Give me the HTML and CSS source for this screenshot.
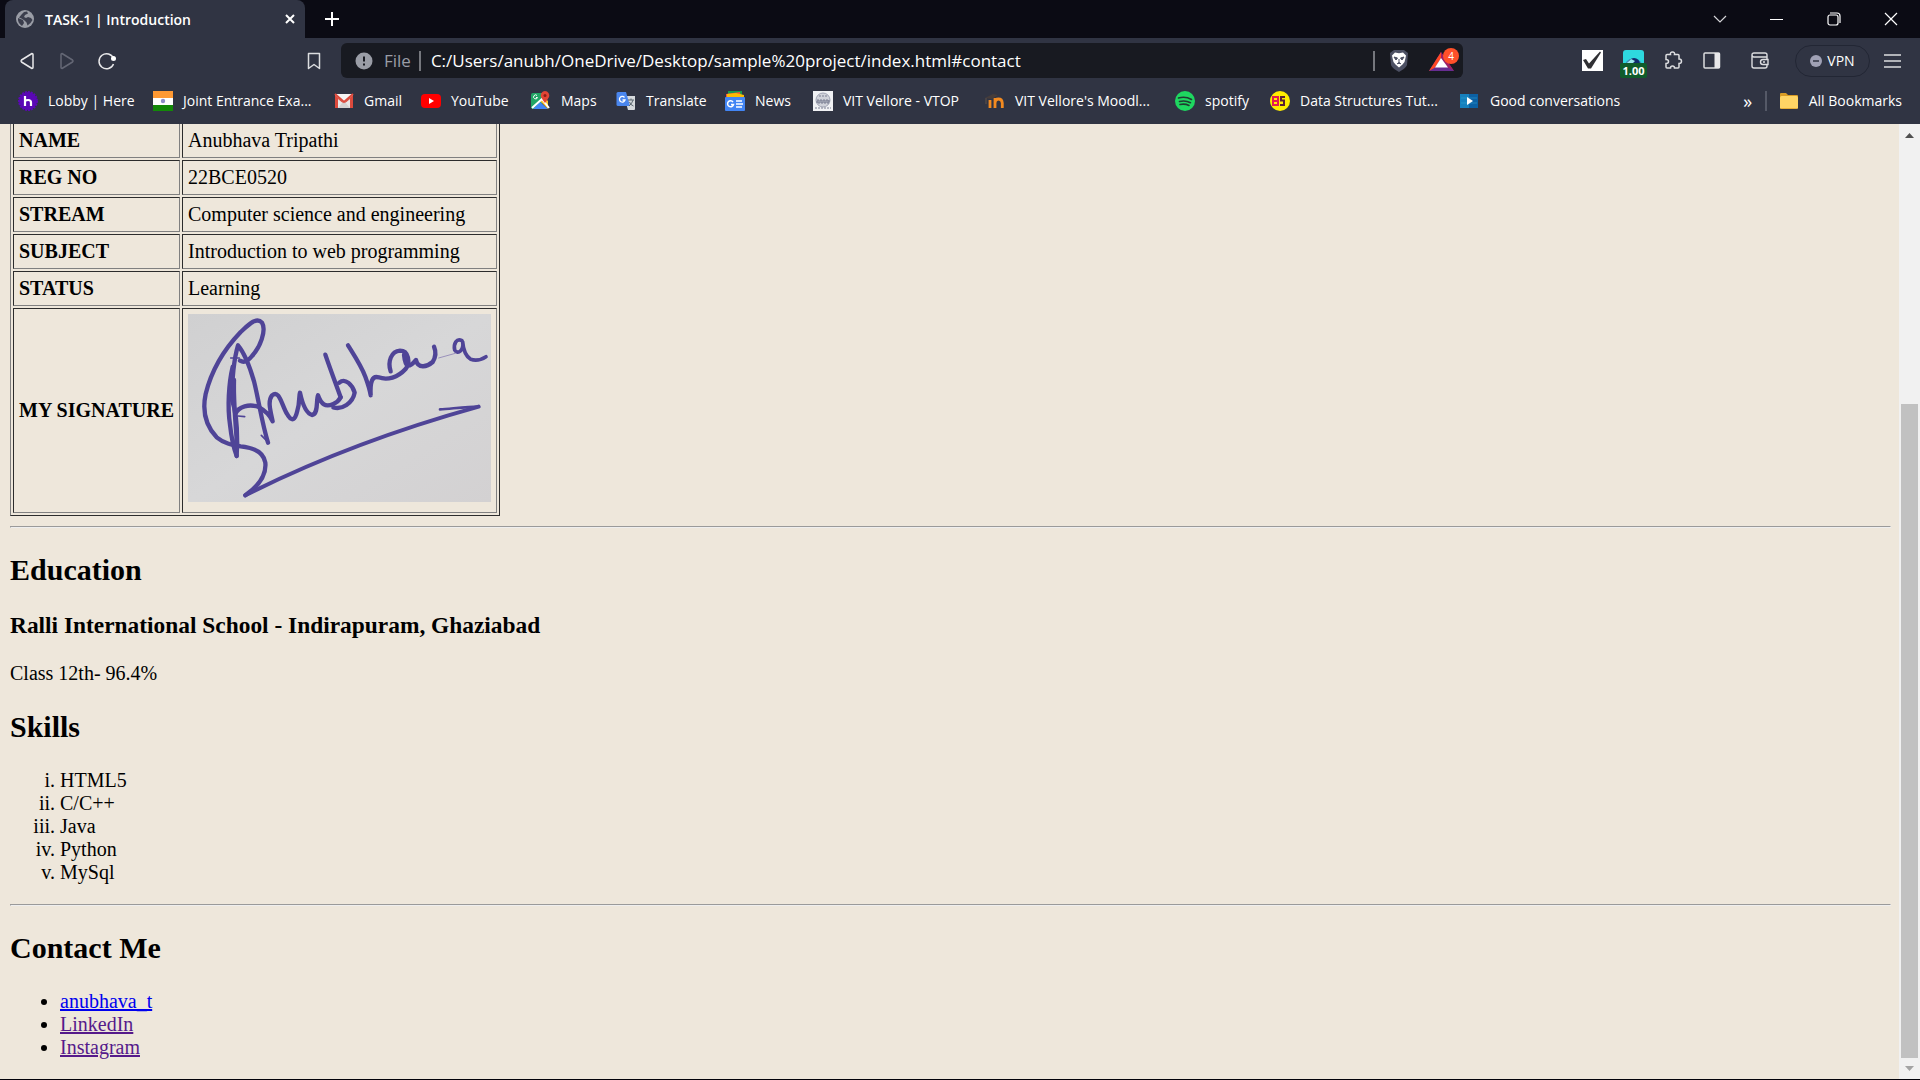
FILE: index.html
```html
<!DOCTYPE html>
<html lang="en">
<head>
<meta charset="utf-8">
<title>TASK-1 | Introduction</title>
<link rel="stylesheet" href="styles.css">
</head>
<body>
<div class="window">
  <header class="chrome">
    <div class="tabstrip">
      <div class="tab">
        <svg class="tab-icon" width="18" height="18" viewBox="0 0 18 18"><circle cx="9" cy="9" r="9" fill="#9a9da6"/><path d="M2 8l5 2 1 3-2 3C3 14 1.500 11 2 8zM8 2l3-.5 1 2-3 1.500-1 2 2 1 2-1 3 1 1.500 2-2 3-3 2.500-1-3-2-2-3-2-2.500-1L6 4z" fill="#3b3e4d"/></svg>
        <span class="tab-title">TASK-1 | Introduction</span>
        <button class="tab-close" aria-label="Close tab"><svg width="10" height="10" viewBox="0 0 10 10"><path d="M1 1l8 8M9 1L1 9" stroke="#fff" stroke-width="2"/></svg></button>
      </div>
      <button class="new-tab" aria-label="New tab"><svg width="16" height="16" viewBox="0 0 16 16"><path d="M8 1v14M1 8h14" stroke="#fff" stroke-width="2"/></svg></button>
      <div class="window-buttons">
        <button aria-label="Search tabs"><svg width="14" height="14" viewBox="0 0 14 14"><path d="M1 4l6 6 6-6" fill="none" stroke="#d5d5d8" stroke-width="1.200"/></svg></button>
        <button aria-label="Minimize"><svg width="14" height="14" viewBox="0 0 14 14"><path d="M0 7.500h13" stroke="#fff"/></svg></button>
        <button aria-label="Restore"><svg width="14" height="14" viewBox="0 0 14 14"><rect x="1" y="3" width="10" height="10" rx="2" fill="none" stroke="#fff" stroke-width="1.200"/><path d="M3 1h7a3 3 0 0 1 3 3v7" fill="none" stroke="#fff" stroke-width="1.200"/></svg></button>
        <button aria-label="Close"><svg width="14" height="14" viewBox="0 0 14 14"><path d="M1 1l12 12M13 1L1 13" stroke="#fff" stroke-width="1.200"/></svg></button>
      </div>
    </div>

    <div class="toolbar">
      <div class="nav">
        <button aria-label="Back"><svg width="20" height="20" viewBox="0 0 20 20"><path d="M15 2.500q1 0 1 1v13q0 1-1 1L4.500 11q-1-1 0-2z" fill="none" stroke="#e8e8ea" stroke-width="1.500" stroke-linejoin="round"/></svg></button>
        <button aria-label="Forward"><svg width="20" height="20" viewBox="0 0 20 20"><path d="M5 2.500q-1 0-1 1v13q0 1 1 1L15.500 11q1-1 0-2z" fill="none" stroke="#646775" stroke-width="1.500" stroke-linejoin="round"/></svg></button>
        <button aria-label="Reload"><svg width="20" height="20" viewBox="0 0 20 20"><path d="M16.500 7.500A7.500 7.500 0 1 0 16.500 13" fill="none" stroke="#e8e8ea" stroke-width="1.500"/><circle cx="16.500" cy="7.500" r="2.500" fill="#fff"/></svg></button>
      </div>
      <button class="save" aria-label="Bookmark this page"><svg width="14" height="18" viewBox="0 0 14 18"><path d="M1.500 1.500h11v15L7 12.500l-5.500 4z" fill="none" stroke="#dcdde0" stroke-width="1.500" stroke-linejoin="round"/></svg></button>
      <div class="address">
        <svg width="18" height="18" viewBox="0 0 18 18"><circle cx="9" cy="9" r="8.500" fill="#9a9da6"/><path d="M9 4.500v5M9 11.500v2" stroke="#181a21" stroke-width="2"/></svg>
        <span class="scheme">File</span>
        <span class="rule"></span>
        <input class="url" type="text" aria-label="Address" value="C:/Users/anubh/OneDrive/Desktop/sample%20project/index.html#contact">
        <span class="rule"></span>
        <button class="shield" aria-label="Shields"><svg width="20" height="22" viewBox="0 0 20 22"><path d="M5 0h10l4 3-1 12c-1 3-5 5-8 7-3-2-7-4-8-7L1 3z" fill="#4c5063"/><path d="M6 2.500l4 .8 4-.8 3 3-.5 2.500-1 4-2 2.500-3.500 3-3.500-3-2-2.500-1-4L3 5.500z" fill="#fff"/><path d="M5 7l3.500 1-1.500 2zM15 7l-3.500 1 1.500 2zM10 9v4M8 14l2-1.500 2 1.500" fill="#4c5063" stroke="#4c5063"/></svg></button>
        <button class="rewards" aria-label="Rewards, 4 new"><svg width="26" height="22" viewBox="0 0 26 22"><path d="M12 2L0 21h25z" fill="#662d91"/><path d="M12 2L0 21l6-3.500L12 8z" fill="#ff4724"/><path d="M12 2v6l7 9.500 6 3.500z" fill="#9e1f63"/><path d="M12 8l-6 9.500h13z" fill="#fff"/></svg><span class="count">4</span></button>
      </div>
      <div class="extensions">
        <button aria-label="Tasks"><svg width="21" height="21" viewBox="0 0 21 21"><path d="M0 0h21v21H0z" fill="#fff"/><path d="M1 10l3-1 3 4.500L18 1.500l1 1L9 18.500H6z" fill="#303034"/></svg></button>
        <button class="speed" aria-label="Video speed"><svg width="21" height="21" viewBox="0 0 21 21"><rect width="21" height="21" rx="3" fill="#2ed8df"/><path d="M2 14a9 8 0 0 1 17 0z" fill="#3d8fb8"/><path d="M5 14a6 6 0 0 1 12 0z" fill="#102b6e"/><path d="M3 14l5-5 4 2-3 3z" fill="#9be9ef"/></svg><span class="rate">1.00</span></button>
        <button aria-label="Extensions"><svg width="19" height="19" viewBox="0 0 19 19"><path d="M2 4.500q0-1 1-1h3.500q-.5-2.500 2-2.500t2 2.500H14q1 0 1 1V8q2.500 0 2.500 2.200T15 12.500V16q0 1-1 1h-3.500q0-2-2-2t-2 2H3q-1 0-1-1v-3.500q2.500 0 2.500-2T2 8.500z" fill="none" stroke="#dcdde0" stroke-width="1.500"/></svg></button>
        <button aria-label="Sidebar"><svg width="18" height="17" viewBox="0 0 18 17"><rect x="1" y="1" width="15.500" height="15" rx="1" fill="none" stroke="#dcdde0" stroke-width="1.500"/><path d="M11.500 1H17v15h-5.500z" fill="#e8e8ea"/></svg></button>
        <button class="wallet" aria-label="Wallet"><svg width="18" height="17" viewBox="0 0 18 17"><path d="M16 4.500V3q0-2-2-2H3Q1 1 1 3v11q0 2 2 2h11q2 0 2-2v-1.500M1 3q0 2 2 2h13v2.500M17 7.500h-5q-2.500 0-2.500 2.500t2.500 2.500h5zM12 10h2" fill="none" stroke="#dcdde0" stroke-width="1.400"/></svg></button>
      </div>
      <button class="vpn"><svg width="12" height="12" viewBox="0 0 12 12"><circle cx="6" cy="6" r="6" fill="#a0a1b5"/><path d="M3 6h6" stroke="#303443" stroke-width="1.500"/></svg>VPN</button>
      <button class="menu" aria-label="Menu"><svg width="18" height="14" viewBox="0 0 18 14"><path d="M0 1h17M0 7h17M0 13h17" stroke="#dcdde0" stroke-width="1.500"/></svg></button>
    </div>

    <nav class="bookmarks">
      <div class="bookmark-list">
        <a href="#"><svg width="20" height="20" viewBox="0 0 20 20"><circle cx="10" cy="10" r="9" fill="#5a08b5" stroke="#5a08b5" stroke-width="2" stroke-dasharray="2 1"/><path d="M7 5v10M7 10.500Q7 9 10 9t3 2.500V15" fill="none" stroke="#fff" stroke-width="2.200"/></svg>Lobby | Here</a>
        <a href="#"><svg width="20" height="20" viewBox="0 0 20 20"><path d="M0 0h20v7H0z" fill="#ff9933"/><path d="M0 7h20v7H0z" fill="#fff"/><path d="M0 14h20v6H0z" fill="#138808"/><circle cx="10" cy="10" r="2.200" fill="#8e8dc8"/></svg>Joint Entrance Exa...</a>
        <a href="#"><svg width="20" height="20" viewBox="0 0 20 20"><path d="M1 3h18v14H1z" fill="#e9e7e7"/><path d="M1 17V4l9 8 9-8v13h-3V8l-6 5-6-5v9z" fill="#dc4a3d"/><path d="M4 17l5-6h2l5 6z" fill="#d5d2d2"/><path d="M2 3h16l-8 7z" fill="#f5f4f4"/><path d="M1 3l9 8 9-8" fill="none" stroke="#dc4a3d" stroke-width="2"/></svg>Gmail</a>
        <a href="#"><svg width="20" height="20" viewBox="0 0 20 20"><rect y="3" width="20" height="14" rx="4" fill="#f00"/><path d="M8 7l5 3-5 3z" fill="#fff"/></svg>YouTube</a>
        <a href="#"><svg width="20" height="20" viewBox="0 0 20 20"><path d="M2 2h12v8L4 18H2q-2 0-2-2V4q0-2 2-2z" fill="#22a565"/><path d="M2 18l7-7 8 7z" fill="#4285f4"/><path d="M9 10l8 8V10l-4-4z" fill="#fbc32e"/><path d="M1 17L11 8l7 9" fill="none" stroke="#fff" stroke-width="2"/><path d="M14 0a4.500 4.500 0 0 1 4 6q-1 2-4 6-3-4-4-6a4.500 4.500 0 0 1 4-6z" fill="#e24435"/><circle cx="14" cy="4.500" r="1.500" fill="#8d1f18"/><path d="M6 4.500a2 2 0 1 0 .5 2H5" fill="none" stroke="#fff"/></svg>Maps</a>
        <a href="#"><svg width="20" height="20" viewBox="0 0 20 20"><path d="M8 5h11v13q0 1-1 1h-6z" fill="#d5d9dd"/><path d="M2 1h8l4 14H2q-1.500 0-1.500-1.500v-11Q.5 1 2 1z" fill="#4a86ee"/><path d="M8.500 6.500A2.800 2.800 0 1 0 9 9H6.500" fill="none" stroke="#fff" stroke-width="1.300"/><path d="M12 9h6M15 7.500V9M17 9q-1 4-4 6M13.500 11q1 3 4 4" fill="none" stroke="#5c6870"/></svg>Translate</a>
        <a href="#"><svg width="20" height="20" viewBox="0 0 20 20"><path d="M3 0h14v6H3z" fill="#159a52"/><path d="M1 3l14-2 1 6H1z" fill="#f5503f"/><path d="M2 3l9-1 8 2v4H2z" fill="#fbbc04"/><rect y="6" width="20" height="14" rx="1" fill="#4285f4"/><path d="M8 11a3 3 0 1 0 .5 2.500H6M11 10h6M11 13h7M11 16h6" fill="none" stroke="#fff" stroke-width="1.500"/></svg>News</a>
        <a href="#"><svg width="20" height="20" viewBox="0 0 20 20"><path d="M0 0h20v20H0z" fill="#f0f1f4"/><circle cx="10" cy="9" r="7" fill="#d0d2da" stroke="#a0a4b4"/><path d="M4 9h12v3H4zM6 5h8M2 17h16" fill="#9a9eae" stroke="#7a7f92" stroke-dasharray="2 1"/></svg>VIT Vellore - VTOP</a>
        <a href="#"><svg width="20" height="20" viewBox="0 0 20 20"><path d="M5 17V9M10 17V7M10 12q0-4 3.500-4t3.800 4v5" fill="none" stroke="#f28a20" stroke-width="2.800"/><path d="M0 7l8-4 5 1-6 4z" fill="#463c3a"/><path d="M1 7v6" stroke="#625346"/></svg>VIT Vellore's Moodl...</a>
        <a href="#"><svg width="20" height="20" viewBox="0 0 20 20"><circle cx="10" cy="10" r="10" fill="#1ed760"/><path d="M3.500 7q7-2 13 1.500M4.500 10.500q6-1.500 11 1.200M5 13.500q5-1 9 1" fill="none" stroke="#203b32" stroke-width="1.600" stroke-linecap="round"/></svg>spotify</a>
        <a href="#"><svg width="20" height="20" viewBox="0 0 20 20"><circle cx="10" cy="10" r="10" fill="#ffed00"/><path d="M3 6h5v8H3zM3 10h5" fill="none" stroke="#e51b50" stroke-width="2"/><path d="M15 6h-4v3.500h3V14h-4" fill="none" stroke="#5a2133" stroke-width="2"/></svg>Data Structures Tut...</a>
        <a href="#"><svg width="20" height="20" viewBox="0 0 20 20"><path d="M0 3h18v14H0z" fill="#1680bd"/><path d="M9 3h9v14H9z" fill="#0c61a4"/><path d="M1 7h16M1 12h16" stroke="#35a7d5" stroke-opacity=".5"/><path d="M7 6l6 4-6 4z" fill="#fff"/></svg>Good conversations</a>
      </div>
      <button class="overflow" aria-label="More bookmarks">»</button>
      <span class="bookmark-rule"></span>
      <a class="all" href="#"><svg width="20" height="20" viewBox="0 0 20 20"><path d="M1 3q0-1 1-1h5l2 2h9q1 0 1 1v10H1z" fill="#d99c25"/><rect x="1" y="5" width="18" height="13" rx="1.500" fill="#ffd565"/><path d="M2 17.500h16" stroke="#e7af38"/></svg>All Bookmarks</a>
    </nav>
  </header>

  <div class="viewport">
    <main class="document">
      <table class="profile">
        <tr><th scope="row">NAME</th><td>Anubhava Tripathi</td></tr>
        <tr><th scope="row">REG NO</th><td>22BCE0520</td></tr>
        <tr><th scope="row">STREAM</th><td>Computer science and engineering</td></tr>
        <tr><th scope="row">SUBJECT</th><td>Introduction to web programming</td></tr>
        <tr><th scope="row">STATUS</th><td>Learning</td></tr>
        <tr><th scope="row">MY SIGNATURE</th><td><svg class="signature" width="303" height="188" viewBox="54 42 909 564" role="img" aria-label="Signature">
          <defs><linearGradient id="paper" x1="0" y1="0" x2="1" y2="1"><stop offset="0" stop-color="#d0d0d1"/><stop offset=".5" stop-color="#d7d7d8"/><stop offset="1" stop-color="#d3d1d2"/></linearGradient></defs>
          <path d="M54 42h909v564H54z" fill="url(#paper)"/>
          <g fill="none" stroke="#4f4497" stroke-width="13" stroke-linecap="round" stroke-linejoin="round">
            <path d="M210 182C220 188 232 186 246 168C270 142 290 92 276 68C258 48 232 78 212 96C168 142 126 204 107 282C96 334 108 378 140 412C162 430 184 434 212 439C252 443 281 458 286 488C290 528 266 558 226 586"/>
            <path d="M200 468C203 410 204 350 186 300C186 242 190 184 204 136C224 160 240 202 252 244C266 300 276 370 294 428"/>
            <path d="M188 200C176 250 172 322 180 374C184 410 191 444 200 468M192 240C190 300 196 370 202 440"/>
            <path d="M196 342C206 318 238 312 264 320C286 332 300 346 308 364C302 334 292 304 306 286C328 268 334 312 350 340C366 370 376 358 382 332C390 308 386 288 390 278C396 306 408 340 426 345C446 342 438 300 444 286C454 314 466 322 490 312C500 308 508 300 512 292"/>
            <path d="M466 164C480 206 498 252 512 292M508 248C526 232 548 256 554 278C548 310 516 330 490 322"/>
            <path d="M534 136C554 168 574 198 586 230C594 252 600 270 602 286C600 246 606 226 626 232C652 242 684 232 706 208C722 188 716 152 690 152C664 154 652 184 662 214M702 164C706 204 716 206 738 180C744 208 772 200 788 186C798 170 798 154 792 140"/>
            <path d="M876 122C860 114 850 130 854 150C864 166 882 150 878 126C880 150 890 170 902 178C920 184 936 178 948 170" stroke-width="11"/>
            <path d="M226 586C440 478 660 394 926 320" stroke-width="12"/>
            <path d="M926 320C890 320 844 326 810 328" stroke-width="8"/>
            <path d="M182 174h26M204 348l20 2M274 406l18 18" stroke-width="5"/>
            <path d="M806 174l50-14" stroke="#9a91bb" stroke-width="3"/>
          </g>
        </svg></td></tr>
      </table>
      <hr>
      <h2>Education</h2>
      <h3>Ralli International School - Indirapuram, Ghaziabad</h3>
      <p>Class 12th- 96.4%</p>
      <h2>Skills</h2>
      <ol class="skills">
        <li>HTML5</li><li>C/C++</li><li>Java</li><li>Python</li><li>MySql</li>
      </ol>
      <hr>
      <h2 id="contact">Contact Me</h2>
      <ul class="contacts">
        <li><a href="#">anubhava_t</a></li>
        <li><a class="seen" href="#">LinkedIn</a></li>
        <li><a class="seen" href="#">Instagram</a></li>
      </ul>
    </main>
    <div class="scrollbar" aria-hidden="true">
      <svg width="21" height="21" viewBox="0 0 21 21"><path d="M6 14h9l-4.500-5z" fill="#505050"/></svg>
      <div class="track"><div class="thumb"></div></div>
      <svg width="21" height="21" viewBox="0 0 21 21"><path d="M6 8h9l-4.500 5z" fill="#a3a3a3"/></svg>
    </div>
  </div>
</div>
</body>
</html>
```
FILE: styles.css
```css
* { box-sizing: border-box; }

body {
  margin: 0;
  background: #02020a;
  font: 20px "Liberation Serif", "Times New Roman", serif;
  color: #000;
}

.window {
  display: flex;
  flex-direction: column;
  min-height: 100vh;
  padding-bottom: 2px;
}

.chrome {
  background: #303443;
  color: #fff;
  font: 14px "Open Sans", "Noto Sans", sans-serif;
  padding-bottom: 6px;
}

.chrome button {
  display: flex;
  align-items: center;
  justify-content: center;
  border: 0;
  padding: 0;
  background: none;
  color: inherit;
  font: inherit;
}

.chrome svg { flex: none; display: block; }

/* Tab strip */
.tabstrip {
  display: flex;
  align-items: stretch;
  height: 38px;
  padding-left: 5px;
  background: #0b0b14;
}

.tab {
  display: flex;
  align-items: center;
  width: 300px;
  padding: 0 10px 0 11px;
  background: #303443;
  border-radius: 8px 8px 0 0;
}

.tab-title {
  flex: 1;
  margin-left: 11px;
  font-weight: 600;
  white-space: nowrap;
}

.new-tab { width: 54px; }

.window-buttons { display: flex; margin-left: auto; padding-right: 1px; }
.window-buttons button { width: 57px; }

/* Toolbar */
.toolbar {
  display: flex;
  align-items: center;
  height: 45px;
  padding-right: 18px;
}

.nav { display: flex; gap: 20px; padding-left: 17px; }
.save { margin: 0 20px 0 190px; }

.address {
  flex: 1;
  display: flex;
  align-items: center;
  height: 35px;
  padding: 0 8px 0 14px;
  background: #181a21;
  border-radius: 6px;
  font-size: 17px;
}

.scheme { margin: 0 8px 0 11px; color: #9a9da6; }
.rule { width: 2px; height: 20px; background: #75777d; }

.url {
  flex: 1;
  min-width: 0;
  border: 0;
  padding: 0 10px;
  background: none;
  color: #fff;
  font: inherit;
}

.chrome .shield { margin: 0 20px 0 14px; }
.chrome .rewards { position: relative; }

.count {
  position: absolute;
  top: -2px;
  right: -4px;
  width: 16px;
  height: 16px;
  border-radius: 8px;
  background: #ff5029;
  font-size: 10px;
  line-height: 16px;
  text-align: center;
}

.extensions {
  display: flex;
  align-items: center;
  gap: 20px;
  margin-left: 119px;
}

.chrome .speed { position: relative; }
.chrome .wallet { margin-left: 10px; }

.rate {
  position: absolute;
  top: 13px;
  left: -3px;
  width: 27px;
  height: 15px;
  border-radius: 2px;
  background: #0f5c2b;
  font-size: 11px;
  font-weight: 700;
  line-height: 15px;
}

.chrome .vpn {
  gap: 5px;
  width: 75px;
  height: 32px;
  margin: 0 14px 0 26px;
  border: 1px solid #222634;
  border-radius: 16px;
}

/* Bookmarks */
.bookmarks {
  display: flex;
  align-items: center;
  height: 35px;
  padding: 0 18px;
}

.bookmarks a {
  display: flex;
  align-items: center;
  gap: 10px;
  color: #fff;
  text-decoration: none;
  white-space: nowrap;
}

.bookmark-list {
  flex: 1;
  display: grid;
  grid-template-columns: 135px 181px 87px 110px 85px 109px 88px 172px 190px 95px 190px auto;
}

.chrome .overflow { width: 10px; font-size: 18px; }
.bookmark-rule { flex: none; width: 2px; height: 20px; margin: 0 12px; background: #555967; }

/* Page */
.viewport {
  flex: 1;
  display: flex;
  overflow: hidden;
  background: #eee7db;
}

.document { flex: 1; margin: -4px 8px 0 10px; }

.profile {
  border: 1px outset #808080;
  border-spacing: 2px;
}

.profile th,
.profile td {
  padding: 5px;
  border: 1px inset #808080;
  text-align: left;
}

hr { margin: 10px 0; }

.skills { list-style-type: lower-roman; }
.skills, .contacts { padding-left: 50px; }

.contacts a { color: #00e; }
.contacts .seen { color: #551a8b; }

.scrollbar {
  display: flex;
  flex-direction: column;
  width: 21px;
  background: #f1f1f1;
}

.track {
  flex: 1;
  display: flex;
  flex-direction: column;
  justify-content: flex-end;
  padding: 0 2px;
}

.thumb { height: 71.6%; background: #c1c1c1; }
```
